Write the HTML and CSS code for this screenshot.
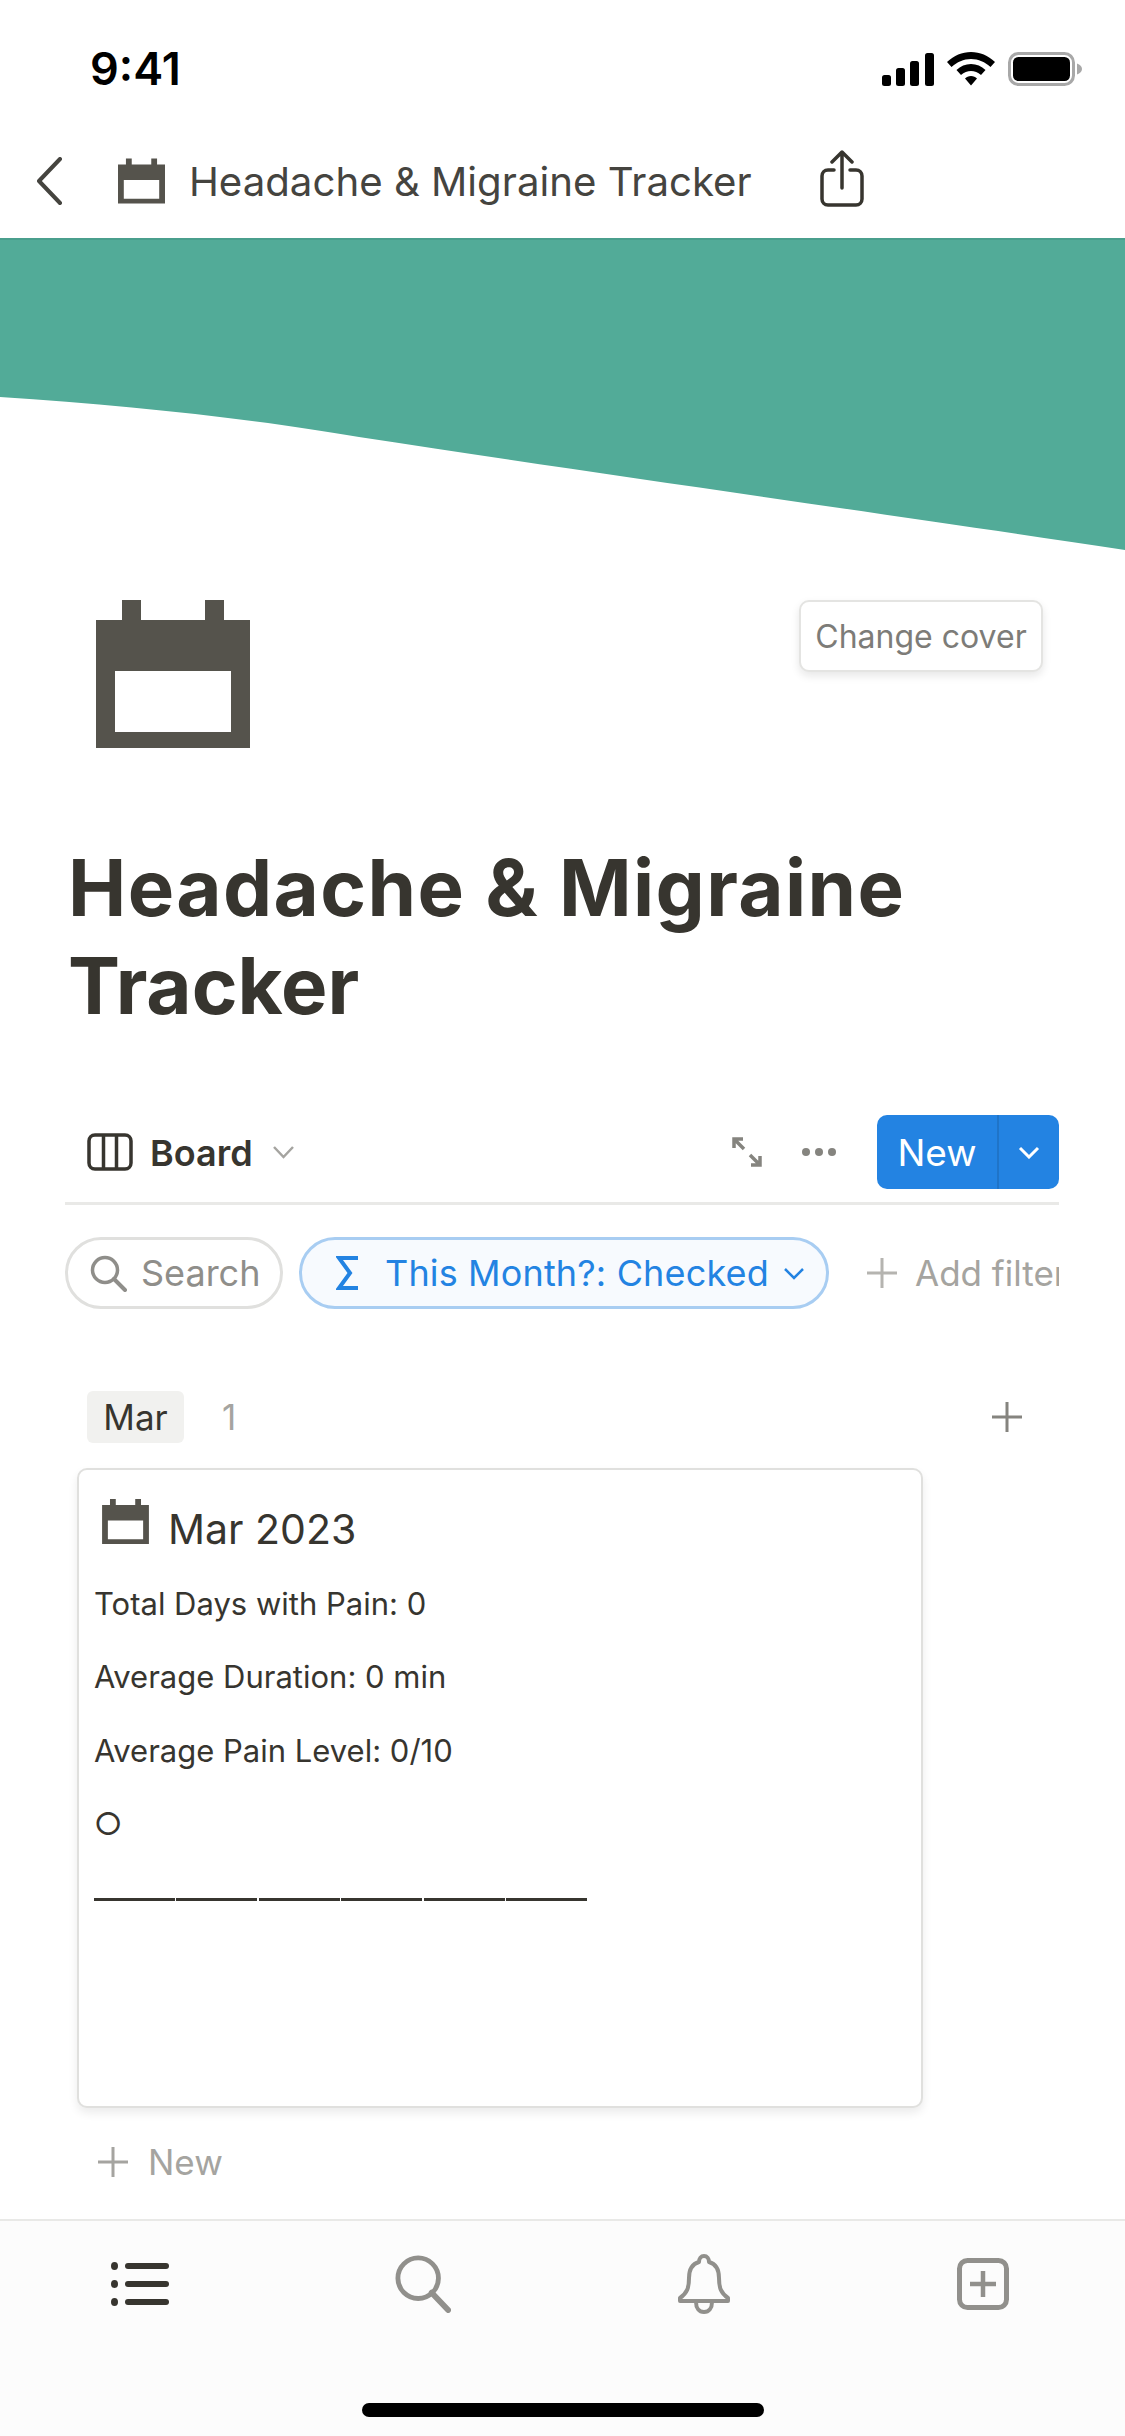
FILE: index.html
```html
<!DOCTYPE html>
<html lang="en">
<head>
    <meta charset="UTF-8">
    <meta name="viewport" content="width=device-width, initial-scale=1.0">
    <title>Headache &amp; Migraine Tracker</title>
    <link rel="stylesheet" href="styles.css">
</head>
<body>
    <svg class="defs" width="0" height="0">
        <symbol id="calendar" viewBox="0 0 154 148">
            <path fill="#55534c" fill-rule="evenodd" d="M0 20H26V0H45V20H109V0H128V20H154V148H0ZM19 71H135V132H19Z"/>
        </symbol>
        <symbol id="plus" viewBox="0 0 32 32">
            <path d="M16 1V31M1 16H31" fill="none" stroke="currentColor" stroke-width="3"/>
        </symbol>
    </svg>

    <div class="phone">
        <!-- Status bar -->
        <div class="status">
            <span class="clock">9:41</span>
            <div class="status-icons">
                <svg width="52" height="33" viewBox="0 0 52 33"><g fill="#000"><rect x="0" y="22" width="9" height="11" rx="2.5"/><rect x="14" y="15" width="9" height="18" rx="2.5"/><rect x="28" y="8" width="9" height="25" rx="2.5"/><rect x="43" y="0" width="9" height="33" rx="2.5"/></g></svg>
                <svg width="48" height="34" viewBox="0 0 48 34"><path fill="#000" d="M24 0C33 0 41 3.500 48 10L43.500 15C38 10 31.500 7 24 7S10 10 4.500 15L0 10C7 3.500 15 0 24 0ZM24 12C29.500 12 34.500 14 38.500 18L34 23C31 20.500 27.500 19 24 19S17 20.500 14 23L9.500 18C13.500 14 18.500 12 24 12ZM24 24C26.500 24 28.500 25 30 26.500L24 33.500L18 26.500C19.500 25 21.500 24 24 24Z"/></svg>
                <svg width="74" height="34" viewBox="0 0 74 34"><rect x="1.500" y="1.500" width="64" height="31" rx="9" fill="none" stroke="#a8a8a8" stroke-width="3"/><rect x="5" y="5" width="57" height="24" rx="5.500" fill="#000"/><path d="M69 11.500C72 12.500 74 14.500 74 17S72 21.500 69 22.500Z" fill="#a8a8a8"/></svg>
            </div>
        </div>

        <!-- Top nav -->
        <nav class="topnav">
            <svg class="back" width="28" height="48" viewBox="0 0 28 48"><path d="M25 2L4 24L25 46" fill="none" stroke="#45443f" stroke-width="4" stroke-linecap="round" stroke-linejoin="round"/></svg>
            <svg class="nav-cal" width="47" height="46"><use href="#calendar"/></svg>
            <span class="nav-title">Headache &amp; Migraine Tracker</span>
            <svg class="share" width="44" height="58" viewBox="0 0 44 58"><path d="M14 20H8C4.500 20 2 22.500 2 26V49C2 52.500 4.500 55 8 55H36C39.500 55 42 52.500 42 49V26C42 22.500 39.500 20 36 20H30M22 38V3M12 12L22 2L32 12" fill="none" stroke="#37352f" stroke-width="3.500" stroke-linecap="round" stroke-linejoin="round"/></svg>
        </nav>

        <main class="page">
            <svg class="cover" width="1125" height="315" viewBox="0 0 1125 315"><path fill="#52ab98" d="M0 0H1125V310C900 276 600 234 359 197C260 180 130 165 0 157Z"/></svg>

            <div class="head-row">
                <svg width="154" height="148"><use href="#calendar"/></svg>
                <button class="change-cover">Change cover</button>
            </div>

            <h1>Headache &amp; Migraine Tracker</h1>

            <div class="content">
                <div class="toolbar">
                    <div class="view-name">
                        <svg width="46" height="38" viewBox="0 0 46 38"><path d="M8 2H38C41.500 2 44 4.500 44 8V30C44 33.500 41.500 36 38 36H8C4.500 36 2 33.500 2 30V8C2 4.500 4.500 2 8 2ZM16.500 2V36M29.500 2V36" fill="none" stroke="#37352f" stroke-width="3.500"/></svg>
                        <span>Board</span>
                        <svg class="view-chev" width="23" height="14" viewBox="0 0 23 14"><path d="M2 2L11.500 12L21 2" fill="none" stroke="#a5a4a0" stroke-width="2.500"/></svg>
                    </div>
                    <div class="tools">
                        <svg width="30" height="30" viewBox="0 0 30 30"><path d="M2 11V2H11M2 2L12 12M28 19V28H19M28 28L18 18" fill="none" stroke="#85847f" stroke-width="3.500"/></svg>
                        <svg class="dots" width="34" height="8" viewBox="0 0 34 8"><g fill="#85847f"><circle cx="4" cy="4" r="4"/><circle cx="17" cy="4" r="4"/><circle cx="30" cy="4" r="4"/></g></svg>
                        <div class="new-btn">
                            <span class="new-label">New</span>
                            <span class="new-arrow"><svg width="22" height="13" viewBox="0 0 22 13"><path d="M2 2L11 11L20 2" fill="none" stroke="#fff" stroke-width="3"/></svg></span>
                        </div>
                    </div>
                </div>

                <div class="filters">
                    <div class="pill pill-search">
                        <svg width="37" height="37" viewBox="0 0 37 37"><circle cx="15" cy="15" r="12.500" fill="none" stroke="#8f8e8a" stroke-width="3.500"/><path d="M24 24L35 35" stroke="#8f8e8a" stroke-width="4" stroke-linecap="round"/></svg>
                        <span>Search</span>
                    </div>
                    <div class="pill pill-filter">
                        <svg width="23" height="36" viewBox="0 0 23 36"><path d="M22 3H3L14 18L3 33H22" fill="none" stroke="#2383e2" stroke-width="4"/></svg>
                        <span>This Month?: Checked</span>
                        <svg width="22" height="13" viewBox="0 0 22 13"><path d="M2 2L11 11L20 2" fill="none" stroke="#2383e2" stroke-width="2.500"/></svg>
                    </div>
                    <div class="add-filter">
                        <svg class="add-plus" width="32" height="32"><use href="#plus"/></svg>
                        <span>Add filter</span>
                    </div>
                </div>

                <div class="column-head">
                    <span class="tag">Mar</span>
                    <span class="count">1</span>
                    <svg class="column-plus" width="32" height="32"><use href="#plus"/></svg>
                </div>

                <div class="card">
                    <div class="card-title">
                        <svg width="47" height="45"><use href="#calendar"/></svg>
                        <span>Mar 2023</span>
                    </div>
                    <div class="card-line">Total Days with Pain: 0</div>
                    <div class="card-line">Average Duration: 0 min</div>
                    <div class="card-line">Average Pain Level: 0/10</div>
                    <div class="card-line">○</div>
                    <div class="card-rule"></div>
                </div>

                <div class="new-row">
                    <svg width="32" height="32"><use href="#plus"/></svg>
                    <span>New</span>
                </div>
            </div>
        </main>

        <!-- Tab bar -->
        <footer class="tabbar">
            <div class="tabs">
                <svg width="58" height="44" viewBox="0 0 58 44"><g fill="#37352f"><ellipse cx="3.500" cy="4" rx="3.500" ry="4"/><ellipse cx="3.500" cy="22" rx="3.500" ry="4"/><ellipse cx="3.500" cy="40" rx="3.500" ry="4"/><rect x="14" y="1" width="44" height="6" rx="3"/><rect x="14" y="19" width="44" height="6" rx="3"/><rect x="14" y="37" width="44" height="6" rx="3"/></g></svg>
                <svg width="56" height="58" viewBox="0 0 58 60"><circle cx="24" cy="24" r="21" fill="none" stroke="#91908c" stroke-width="5"/><path d="M38 39L55 57" stroke="#91908c" stroke-width="6" stroke-linecap="round"/></svg>
                <svg width="54" height="60" viewBox="0 0 54 60"><path d="M27 2C30 2 32 4.500 32 8C39 10 42 16 42 24C42 34 44 39 51 44V47H3V44C10 39 12 34 12 24C12 16 15 10 22 8C22 4.500 24 2 27 2ZM19 48C19 54 22 58 27 58S35 54 35 48" fill="none" stroke="#91908c" stroke-width="4" stroke-linejoin="round"/></svg>
                <svg width="52" height="52" viewBox="0 0 52 52"><rect x="2.500" y="2.500" width="47" height="47" rx="8" fill="none" stroke="#91908c" stroke-width="5"/><path d="M26 13V39M13 26H39" stroke="#91908c" stroke-width="4.500"/></svg>
            </div>
            <div class="home-bar"></div>
        </footer>
    </div>
</body>
</html>
```

FILE: styles.css
```css
/* Reset */
html, body {
    margin: 0;
    padding: 0;
    background: #fff;
}

body {
    font-family: Inter, "Liberation Sans", sans-serif;
    color: #37352f;
}

.defs {
    display: block;
    height: 0;
}

.phone {
    width: 1125px;
    height: 2436px;
    display: flex;
    flex-direction: column;
    overflow: hidden;
}

/* Status bar */
.status {
    height: 136px;
    display: flex;
    justify-content: space-between;
    align-items: flex-start;
    padding: 45px 43px 0 90px;
    box-sizing: border-box;
}

.clock {
    font-size: 45px;
    line-height: 48px;
    font-weight: 600;
    color: #000;
}

.status-icons {
    display: flex;
    align-items: center;
    gap: 13px;
    padding-top: 7px;
}

/* Top nav */
.topnav {
    height: 104px;
    display: flex;
    align-items: center;
    padding-left: 35px;
    padding-bottom: 12px;
    border-bottom: 2px solid #4a9f8d;
    box-sizing: border-box;
}

.nav-cal {
    margin-left: 55px;
}

.nav-title {
    margin-left: 24px;
    font-size: 40.2px;
    color: #45443f;
}

.share {
    margin-left: 68px;
    margin-top: -4px;
}

/* Page */
.page {
    flex: 1;
    min-height: 0;
}

.cover {
    display: block;
}

.head-row {
    display: flex;
    justify-content: space-between;
    align-items: flex-start;
    margin-top: 45px;
    padding: 0 82px 0 96px;
}

.change-cover {
    width: 244px;
    height: 72px;
    padding: 0;
    background: #fff;
    border: 2px solid #e4e4e2;
    border-radius: 10px;
    box-shadow: 0 4px 8px rgba(15, 15, 15, 0.1);
    font-family: inherit;
    font-size: 32px;
    color: #7d7c78;
}

h1 {
    margin: 91px 120px 0 68px;
    font-size: 78px;
    line-height: 98px;
    font-weight: 700;
    color: #37352f;
}

h1::first-line {
    letter-spacing: 1.4px;
}

.content {
    margin: 80px 66px 0 65px;
}

/* Toolbar */
.toolbar {
    display: flex;
    justify-content: space-between;
    align-items: center;
    padding-bottom: 13px;
    border-bottom: 3px solid #e9e9e7;
}

.view-name {
    display: flex;
    align-items: center;
    padding-left: 22px;
    font-size: 36px;
    font-weight: 600;
}

.view-name span {
    margin-left: 17px;
    padding-top: 2px;
}

.view-chev {
    margin-left: 19px;
}

.tools {
    display: flex;
    align-items: center;
}

.dots {
    margin-left: 40px;
    margin-right: 41px;
}

.new-btn {
    width: 182px;
    height: 74px;
    display: flex;
    background: #2383e2;
    border-radius: 10px;
    color: #fff;
}

.new-label {
    width: 120px;
    border-right: 2px solid #1f74c8;
    display: flex;
    align-items: center;
    justify-content: center;
    font-size: 37px;
    font-weight: 400;
}

.new-arrow {
    flex: 1;
    display: flex;
    align-items: center;
    justify-content: center;
}

/* Filters */
.filters {
    display: flex;
    align-items: center;
    margin-top: 32px;
    overflow: hidden;
    white-space: nowrap;
    font-size: 36px;
}

.pill {
    height: 72px;
    display: flex;
    align-items: center;
    flex-shrink: 0;
    border-radius: 36px;
    box-sizing: border-box;
}

.pill-search {
    width: 218px;
    padding-left: 22px;
    border: 3px solid #e0e0de;
    color: #8f8e8a;
}

.pill-search span {
    margin-left: 14px;
}

.pill-filter {
    width: 530px;
    margin-left: 16px;
    padding-left: 34px;
    background: #f7fafe;
    border: 3px solid #a8cdf2;
    color: #2383e2;
}

.pill-filter span {
    margin-left: 26px;
    margin-right: 14px;
    letter-spacing: 0.15px;
}

.add-filter {
    display: flex;
    align-items: center;
    flex-shrink: 0;
    margin-left: 37px;
    font-size: 35px;
    color: #a5a4a0;
}

.add-plus {
    color: #b5b4b0;
    margin-right: 17px;
}

/* Board column */
.column-head {
    display: flex;
    align-items: center;
    height: 52px;
    margin-top: 82px;
    padding-left: 22px;
    font-size: 35px;
}

.tag {
    width: 97px;
    height: 52px;
    line-height: 52px;
    text-align: center;
    background: #f1f1ef;
    border-radius: 6px;
}

.count {
    margin-left: 38px;
    color: #a5a4a0;
}

.column-plus {
    margin-left: auto;
    margin-right: 36px;
    color: #85847f;
}

.card {
    width: 846px;
    height: 640px;
    margin: 25px 0 0 12px;
    padding: 29px 15px 0;
    background: #fff;
    border: 2px solid #e0e0de;
    border-radius: 10px;
    box-shadow: 0 5px 10px rgba(15, 15, 15, 0.08);
    box-sizing: border-box;
}

.card-title {
    display: flex;
    align-items: center;
    height: 45px;
    padding-left: 8px;
    font-size: 41px;
    margin-bottom: 22.5px;
}

.card-title span {
    margin-left: 19px;
    margin-top: 14px;
}

.card-line {
    height: 73.5px;
    line-height: 73.5px;
    font-size: 31px;
}

.card-rule {
    width: 494px;
    height: 3px;
    margin-top: 37.5px;
    background: repeating-linear-gradient(90deg, #37352f 0, #37352f 81px, #fff 81px, #fff 82.4px);
}

.new-row {
    display: flex;
    align-items: center;
    height: 50px;
    margin-top: 29px;
    padding-left: 32px;
    font-size: 35px;
    color: #a5a4a0;
}

.new-row span {
    margin-left: 19px;
}

/* Tab bar */
.tabbar {
    height: 217px;
    flex-shrink: 0;
    background: #fcfcfc;
    border-top: 2px solid #e9e9e7;
    box-sizing: border-box;
}

.tabs {
    display: flex;
    align-items: center;
    gap: 226px;
    height: 60px;
    margin: 33px 0 0 111px;
}

.home-bar {
    width: 402px;
    height: 14px;
    margin: 89px 0 0 362px;
    background: #000;
    border-radius: 7px;
}
```
